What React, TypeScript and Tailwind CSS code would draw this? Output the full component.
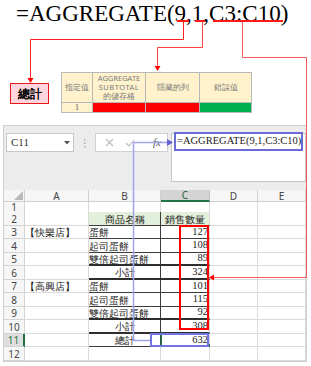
import React from "react";

type Edge = "none" | "top" | "thin" | "thick";
type Row = {
  n: number;
  h: string;
  a?: string;
  b?: string;
  bc?: boolean;
  c?: string;
  edge: Edge;
  hdr?: boolean;
  active?: boolean;
};

const rows: Row[] = [
  { n: 1, h: "h-[10px]", edge: "top" },
  { n: 2, h: "h-[14px]", b: "商品名稱", bc: true, c: "銷售數量", edge: "thin", hdr: true },
  { n: 3, h: "h-[13px]", a: "【快樂店】", b: "蛋餅", c: "127", edge: "thin" },
  { n: 4, h: "h-[14px]", b: "起司蛋餅", c: "108", edge: "thin" },
  { n: 5, h: "h-[13px]", b: "雙倍起司蛋餅", c: "89", edge: "thick" },
  { n: 6, h: "h-[14px]", b: "小計", bc: true, c: "324", edge: "thick" },
  { n: 7, h: "h-[13px]", a: "【高興店】", b: "蛋餅", c: "101", edge: "thin" },
  { n: 8, h: "h-[14px]", b: "起司蛋餅", c: "115", edge: "thin" },
  { n: 9, h: "h-[13px]", b: "雙倍起司蛋餅", c: "92", edge: "thick" },
  { n: 10, h: "h-[14px]", b: "小計", bc: true, c: "308", edge: "thick" },
  { n: 11, h: "h-[13px]", b: "總計", bc: true, c: "632", edge: "thin", active: true },
  { n: 12, h: "h-[14px]", edge: "none" },
];

function edgeClass(e: Edge) {
  if (e === "thick") return "border-b-2 border-b-[#2e2e2e]";
  if (e === "thin" || e === "top") return "border-b border-b-[#3c3c3c]";
  return "border-b border-b-[#dadada]";
}

function SheetRow({ r }: { r: Row }) {
  const inTable = r.n >= 2 && r.n <= 11;
  const bg = r.hdr ? "bg-[#e2efda]" : "bg-white";
  return (
    <div className={`grid grid-cols-[21px_64px_72px_49px_48px_48px] ${r.h}`}>
      <div
        className={
          r.active
            ? "flex items-center justify-center border-b border-b-[#d4d4d4] border-r-2 border-r-[#217346] bg-[#dedede] text-[10px] leading-none text-[#217346]"
            : "flex items-center justify-center border-b border-r border-[#d4d4d4] bg-[#f6f6f6] text-[10px] leading-none text-[#444]"
        }
      >
        {r.n}
      </div>
      <div className="flex items-center whitespace-nowrap border-b border-r border-[#dadada] bg-white text-[10px] leading-none text-[#222]">
        {r.a}
      </div>
      <div
        className={`flex items-center whitespace-nowrap border-r border-[#dadada] ${edgeClass(r.edge)} ${
          inTable ? "border-r-[#3c3c3c]" : ""
        } ${bg} ${r.bc ? "justify-center" : "justify-start"} text-[10px] leading-none text-[#222]`}
      >
        {r.b}
      </div>
      {r.hdr ? (
        <div className={`flex items-center justify-center whitespace-nowrap border-r border-[#dadada] ${edgeClass(r.edge)} ${bg} text-[10px] leading-none text-[#222]`}>
          {r.c}
        </div>
      ) : (
        <div className={`flex items-center justify-end whitespace-nowrap border-r border-[#dadada] ${edgeClass(r.edge)} ${bg} pr-[1px] text-[10.5px] leading-none text-[#222]`}>
          <span className="font-['Liberation_Serif']">{r.c}</span>
        </div>
      )}
      <div className="border-b border-r border-[#dadada] bg-white" />
      <div className="border-b border-r border-[#dadada] bg-white" />
    </div>
  );
}

function ColHeader() {
  const cols = ["A", "B", "C", "D", "E"];
  return (
    <div className="grid h-[12px] grid-cols-[21px_64px_72px_49px_48px_48px]">
      <div className="flex items-end justify-end border-b border-r border-[#d0d0d0] bg-[#f6f6f6] pb-[1px] pr-[1px]">
        <svg width="9" height="9" viewBox="0 0 9 9">
          <polygon points="9,0 9,9 0,9" fill="#b9b9b9" />
        </svg>
      </div>
      {cols.map((c) =>
        c === "C" ? (
          <div
            key={c}
            className="flex items-center justify-center border-b-2 border-r border-b-[#217346] border-r-[#c0c0c0] bg-[#d4d4d4] text-[10px] leading-none text-[#2c5e3f]"
          >
            {c}
          </div>
        ) : (
          <div
            key={c}
            className="flex items-center justify-center border-b border-r border-[#d0d0d0] bg-[#f6f6f6] text-[10px] leading-none text-[#444]"
          >
            {c}
          </div>
        )
      )}
    </div>
  );
}

export default function App() {
  return (
    <div className="relative h-[366px] w-[311px] overflow-hidden bg-white">
      {/* Top explanation */}
      <div className="flex h-[125px] flex-col">
        <div className="h-[72px] whitespace-nowrap pl-[16px] pt-[1px] text-[23px] leading-[23px] text-black">
          <span className="font-['Liberation_Serif']">=AGGREGATE(9,1,C3:C10)</span>
        </div>
        <div className="flex items-start gap-[12px] pl-[10px]">
          <div className="mt-[11px] flex h-[21px] w-[39px] items-center justify-center border border-[#e81818] bg-[#ffd6dd] text-[12px] font-bold leading-none text-black">
            總計
          </div>
          <div className="grid grid-cols-[31px_53px_54px_52px] grid-rows-[30px_10px] border-l border-t border-[#b8b8b8] text-[7.5px] text-[#7a7a7a]">
            <div className="flex items-center justify-center border-b border-r border-[#b8b8b8] bg-[#fff2cc] leading-none">
              指定值
            </div>
            <div className="flex flex-col items-center justify-center border-b border-r border-[#b8b8b8] bg-[#fff2cc] text-center leading-[9px]">
              <span>AGGREGATE</span>
              <span className="tracking-[0.5px]">SUBTOTAL</span>
              <span>的儲存格</span>
            </div>
            <div className="flex items-center justify-center border-b border-r border-[#b8b8b8] bg-[#fff2cc] leading-none">
              隱藏的列
            </div>
            <div className="flex items-center justify-center border-b border-r border-[#b8b8b8] bg-[#fff2cc] leading-none">
              錯誤值
            </div>
            <div className="flex items-center justify-center border-b border-r border-[#b8b8b8] bg-[#fff2cc] text-[9px] leading-none text-[#666]">
              <span className="font-['Liberation_Serif']">1</span>
            </div>
            <div className="border-b border-r border-[#b8b8b8] bg-[#ff0000]" />
            <div className="border-b border-r border-[#b8b8b8] bg-[#ff0000]" />
            <div className="border-b border-r border-[#b8b8b8] bg-[#00b050]" />
          </div>
        </div>
      </div>

      {/* Excel panel */}
      <div className="ml-[3px] flex h-[237px] w-[304px] flex-col border border-[#cfcfcf] bg-[#ececec]">
        <div className="flex h-[64px] items-start pl-[2px] pt-[7px]">
          <div className="flex h-[19px] w-[68px] items-center justify-between border border-[#c6c6c6] bg-white pl-[4px] pr-[3px]">
            <span className="font-['Liberation_Serif'] text-[11px] leading-none text-[#333]">C11</span>
            <svg width="6" height="4" viewBox="0 0 6 4">
              <polygon points="0,0 6,0 3,3.5" fill="#555" />
            </svg>
          </div>
          <div className="flex w-[21px] justify-center pt-[6px]">
            <svg width="2" height="9" viewBox="0 0 2 9">
              <rect x="0" y="0" width="1.5" height="1.5" fill="#b0b0b0" />
              <rect x="0" y="3.5" width="1.5" height="1.5" fill="#b0b0b0" />
              <rect x="0" y="7" width="1.5" height="1.5" fill="#b0b0b0" />
            </svg>
          </div>
          <div className="flex h-[19px] w-[73px] items-center border border-[#d0d0d0] bg-white">
            <div className="flex w-[26px] justify-center">
              <svg width="9" height="9" viewBox="0 0 9 9">
                <path d="M1 1 L8 8 M8 1 L1 8" stroke="#bdbdbd" strokeWidth="1.1" />
              </svg>
            </div>
            <div className="flex w-[16px] justify-center">
              <svg width="10" height="8" viewBox="0 0 10 8">
                <path d="M1 4 L4 7 L9 1" stroke="#bdbdbd" strokeWidth="1.1" fill="none" />
              </svg>
            </div>
            <div className="flex w-[29px] justify-end pr-[6px]">
              <span className="font-['Liberation_Serif'] text-[11px] italic leading-none text-[#555]">fx</span>
            </div>
          </div>
          <div className="ml-[3px] h-[49px] flex-1 border border-[#c6c6c6] bg-white pl-[2px]">
            <div className="-mt-[2px] flex h-[19px] w-[129px] items-center whitespace-nowrap border-2 border-[#6b6bd8] pl-[1px] text-[10.5px] leading-none text-[#222]">
              <span className="font-['Liberation_Serif']">=AGGREGATE(9,1,C3:C10)</span>
            </div>
          </div>
        </div>
        <div className="flex flex-col bg-white">
          <ColHeader />
          {rows.map((r) => (
            <SheetRow key={r.n} r={r} />
          ))}
        </div>
      </div>

      {/* Annotation overlay */}
      <svg className="pointer-events-none absolute left-0 top-0" width="311" height="366" viewBox="0 0 311 366">
        <rect x="177" y="20" width="12" height="2" fill="#ff1a1a" />
        <rect x="195" y="20" width="10" height="2" fill="#ff1a1a" />
        <rect x="213" y="20" width="70" height="2" fill="#ff1a1a" />
        <path d="M183.5 22 V39.5 H30.5 V79" stroke="#f22" strokeWidth="1" fill="none" />
        <polygon points="27.5,78 33.5,78 30.5,83" fill="#f00" />
        <path d="M202.5 22 V47.5 H157.5 V67" stroke="#f44" strokeWidth="1" fill="none" />
        <polygon points="154.5,66 160.5,66 157.5,71" fill="#f00" />
        <path d="M242.5 22 V57.5 H306.5 V277.5 H213" stroke="#f35a5a" strokeWidth="1" fill="none" />
        <polygon points="214,274.5 214,280.5 209,277.5" fill="#f00" />
        <rect x="180" y="226" width="28" height="103" stroke="#ff0000" strokeWidth="2" fill="none" />
        <rect x="160.5" y="334" width="1.5" height="12" fill="#217346" />
        <rect x="207" y="344" width="3" height="3" fill="#217346" />
        <path d="M133.5 341 V142.5 H168" stroke="#a3a3ec" strokeWidth="1.5" fill="none" />
        <path d="M133.5 340.5 H150" stroke="#a3a3ec" strokeWidth="1.5" fill="none" />
        <polygon points="167,139 167,146 173,142.5" fill="#6262d6" />
        <rect x="151" y="334" width="57" height="12" stroke="#7474e0" strokeWidth="2" fill="none" />
      </svg>
    </div>
  );
}
